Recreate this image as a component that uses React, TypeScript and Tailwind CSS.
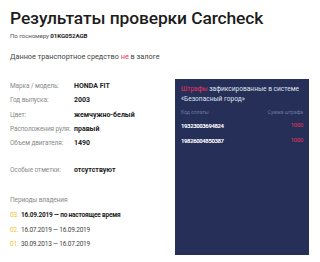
const specs = [
  { label: 'Марка / модель:', value: 'HONDA FIT' },
  { label: 'Год выпуска:', value: '2003' },
  { label: 'Цвет:', value: 'жемчужно-белый' },
  { label: 'Расположения руля:', value: 'правый' },
  { label: 'Объем двигателя:', value: '1490' },
];

const fines = [
  { code: '19323003694824', sum: '1000' },
  { code: '19826004850387', sum: '1000' },
];

const periods = [
  { n: '03.', text: '16.09.2019 — по настоящее время', current: true },
  { n: '02.', text: '16.07.2019 — 16.09.2019' },
  { n: '01.', text: '30.09.2013 — 16.07.2019' },
];

export default function App() {
  return (
    <div className="h-[262px] w-[320px] overflow-hidden bg-white font-['Roboto',sans-serif] text-[#1c1c1c]">
      <div className="px-[10px] pt-[8px]">
        <h1 className="text-[17.4px] font-medium leading-[20px] tracking-[-0.1px]">Результаты проверки Carcheck</h1>
        <p className="mt-[4px] text-[6.2px] leading-[9px] tracking-[-0.1px] text-[#555]">
          По госномеру <span className="font-bold text-[#222]">01KG052AGB</span>
        </p>
        <p className="mt-[11px] text-[7.3px] leading-[10px] text-[#444]">
          Данное транспортное средство <span className="text-[#e8345a]">не</span> в залоге
        </p>
      </div>

      <div className="mt-[17px] flex pl-[10px] pr-[11px]">
        <div className="w-[165px]">
          <div className="flex flex-col gap-[5.3px] pt-[3px]">
            {specs.map((s) => (
              <div key={s.label} className="flex whitespace-nowrap leading-[9px]">
                <span className="w-[64px] text-[6.5px] tracking-[-0.1px] text-[#8a8a8a]">{s.label}</span>
                <span className="text-[7px] font-bold text-[#222]">{s.value}</span>
              </div>
            ))}
          </div>
          <div className="mt-[18px] flex whitespace-nowrap leading-[9px]">
            <span className="w-[64px] text-[6.5px] tracking-[-0.1px] text-[#8a8a8a]">Особые отметки:</span>
            <span className="text-[7px] font-bold text-[#222]">отсутствуют</span>
          </div>
          <p className="mt-[21px] text-[6.5px] leading-[9px] tracking-[-0.1px] text-[#8a8a8a]">Периоды владения</p>
          <div className="mt-[6px] flex flex-col gap-[5.5px]">
            {periods.map((p) => (
              <div key={p.n} className="flex whitespace-nowrap text-[6.5px] leading-[9px] tracking-[-0.2px]">
                <span className="w-[11px] text-[#f2c230]">{p.n}</span>
                <span className={p.current ? 'font-bold text-[#222]' : 'text-[#444]'}>{p.text}</span>
              </div>
            ))}
          </div>
        </div>

        <div className="h-[176px] w-[134px] bg-[#262f58] pl-[6px] pr-[6px] pt-[5px] text-white">
          <p className="whitespace-nowrap text-[6.6px] leading-[10px] text-[#dfe2ee]">
            <span className="text-[#e8345a]">Штрафы</span> зафиксированные в системе
            <br />
            «Безопасный город»
          </p>
          <div className="mt-[4px] flex justify-between text-[5px] leading-[8px] text-[#6e779c]">
            <span>Код оплаты</span>
            <span>Сумма штрафа</span>
          </div>
          <div className="mt-[4.5px] flex flex-col gap-[6px]">
            {fines.map((f) => (
              <div key={f.code} className="flex items-center justify-between leading-[9px]">
                <span className="text-[6px] font-bold tracking-[-0.4px] text-white">{f.code}</span>
                <span className="text-[5.8px] tracking-[-0.2px] text-[#e8345a]">{f.sum}</span>
              </div>
            ))}
          </div>
        </div>
      </div>
    </div>
  );
}
